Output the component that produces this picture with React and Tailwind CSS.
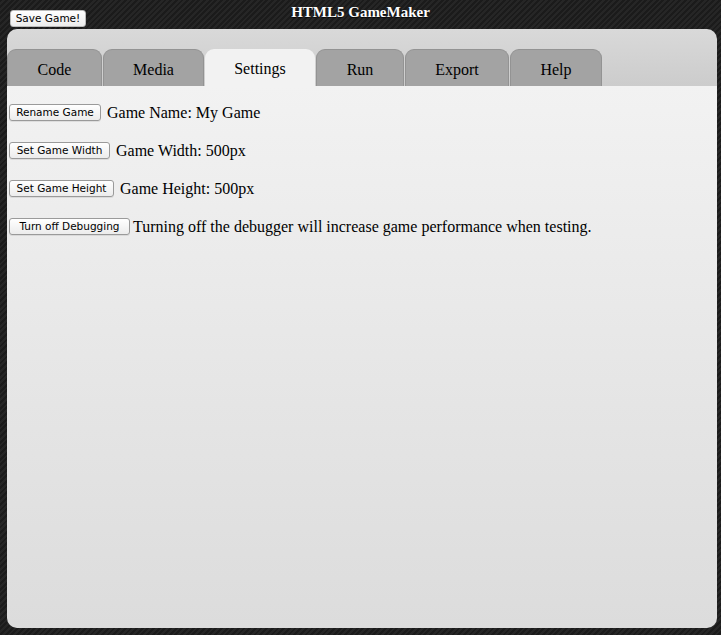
export default function App() {
  const tabs = [
    { name: "Code", w: "w-[95px]" },
    { name: "Media", w: "w-[101px]" },
    { name: "Settings", w: "w-[110px]", active: true },
    { name: "Run", w: "w-[88px]" },
    { name: "Export", w: "w-[104px]" },
    { name: "Help", w: "w-[92px]" },
  ];
  const rows = [
    { btn: "Rename Game", w: "w-[92px]", ml: "ml-[6px]", text: "Game Name: My Game" },
    { btn: "Set Game Width", w: "w-[101px]", ml: "ml-[6px]", text: "Game Width: 500px" },
    { btn: "Set Game Height", w: "w-[105px]", ml: "ml-[6px]", text: "Game Height: 500px" },
    { btn: "Turn off Debugging", w: "w-[121px]", ml: "ml-[3px]", text: "Turning off the debugger will increase game performance when testing." },
  ];
  const btnCls =
    "h-[17px] rounded-[3px] border border-[#9a9a9a] bg-gradient-to-b from-white to-[#ececec] text-[10.5px] leading-[15px] text-black font-['DejaVu_Sans',sans-serif] shadow-[0_1px_0_rgba(0,0,0,0.08)] text-center";
  return (
    <div className="w-[721px] h-[635px] overflow-hidden bg-[#1e1e1e] bg-[repeating-linear-gradient(135deg,#1b1b1b_0px,#1b1b1b_2px,#262626_2px,#262626_4px)] font-['Liberation_Serif',serif]">
      <div className="relative h-[29px]">
        <button className={"absolute left-[10px] top-[10px] w-[76px] " + btnCls + " border-[#bbb]"}>Save Game!</button>
        <div className="text-center pt-[3px] text-[15px] leading-[18px] font-bold text-white [text-shadow:0_1px_1px_rgba(0,0,0,0.8)]">
          HTML5 GameMaker
        </div>
      </div>
      <div className="ml-[7px] w-[710px] h-[599px] rounded-[10px] overflow-hidden flex flex-col">
        <div className="h-[57px] pt-[20px] flex items-end gap-[1px] bg-gradient-to-b from-[#d9d9d9] to-[#cccccc]">
          {tabs.map((t) => (
            <div
              key={t.name}
              className={
                t.w +
                " h-[37px] rounded-t-[9px] flex items-center justify-center text-[16px] text-black " +
                (t.active
                  ? "bg-[#f2f2f2] pt-[3px]"
                  : "bg-[#a3a3a3] border border-b-0 border-[#939393] pt-[3px]")
              }
            >
              {t.name}
            </div>
          ))}
        </div>
        <div className="flex-1 bg-gradient-to-b from-[#f2f2f2] to-[#dcdcdc] px-[2px] pt-[18px] flex flex-col gap-[21px]">
          {rows.map((r) => (
            <div key={r.btn} className="flex items-center h-[17px] text-[16px] text-black whitespace-nowrap">
              <button className={r.w + " " + btnCls}>{r.btn}</button>
              <span className={r.ml}>{r.text}</span>
            </div>
          ))}
        </div>
      </div>
    </div>
  );
}
